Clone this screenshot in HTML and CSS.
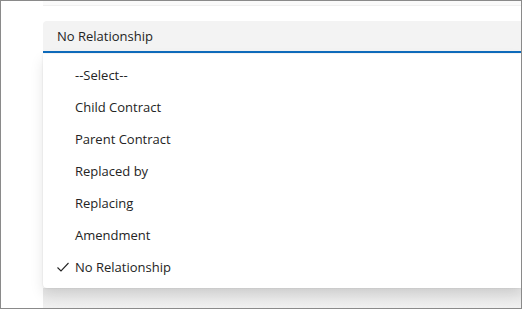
FILE: index.html
```html
<!DOCTYPE html>
<html lang="en">
<head>
    <meta charset="UTF-8">
    <meta name="viewport" content="width=device-width, initial-scale=1.0">
    <title>Relationship</title>
    <link rel="stylesheet" href="styles.css">
</head>
<body>
    <div class="window">
        <div class="card-edge"></div>

        <div class="field">No Relationship</div>

        <div class="listbox">
            <div class="option">--Select--</div>
            <div class="option">Child Contract</div>
            <div class="option">Parent Contract</div>
            <div class="option">Replaced by</div>
            <div class="option">Replacing</div>
            <div class="option">Amendment</div>
            <div class="option selected">
                <svg class="check" width="16" height="16" viewBox="0 0 16 16">
                    <path d="M2.5 8.5 L6 12 L13.5 4" fill="none" stroke="#242424" stroke-width="1.1"/>
                </svg>
                No Relationship
            </div>
        </div>

        <div class="panel-below"></div>
    </div>
</body>
</html>
```

FILE: styles.css
```css
body {
    margin: 0;
    font-family: "Open Sans", "Noto Sans", sans-serif;
    font-size: 13px;
    color: #242424;
    background: white;
}
.window {
    width: 522px;
    height: 309px;
    box-sizing: border-box;
    border: 1px solid #8a8a8a;
    background: #fff;
    overflow: hidden;
    display: flex;
    flex-direction: column;
}
.card-edge {
    margin-left: 42px;
    height: 4px;
    background: #fafafa;
    border-bottom: 1px solid #f0f0f0;
}
.field {
    margin: 15px 0 0 42px;
    height: 30px;
    line-height: 30px;
    padding-left: 14px;
    background: #f3f3f3;
    border-radius: 4px 0 0 0;
    border-bottom: 2px solid #0f6cbd;
}
.listbox {
    position: relative;
    z-index: 1;
    margin-left: 42px;
    margin-top: 1px;
    padding: 5px 0 5px 0;
    background: #fff;
    border-radius: 0 0 0 4px;
    box-shadow: 0 0 2px rgba(0, 0, 0, 0.12), 0 6px 14px rgba(0, 0, 0, 0.1);
}
.option {
    position: relative;
    height: 32px;
    line-height: 32px;
    padding-left: 32px;
}
.check {
    position: absolute;
    left: 12px;
    top: 8px;
}
.panel-below {
    flex: 1;
    margin-left: 42px;
    background: linear-gradient(#e4e4e4, #f0f0f0);
}
```
